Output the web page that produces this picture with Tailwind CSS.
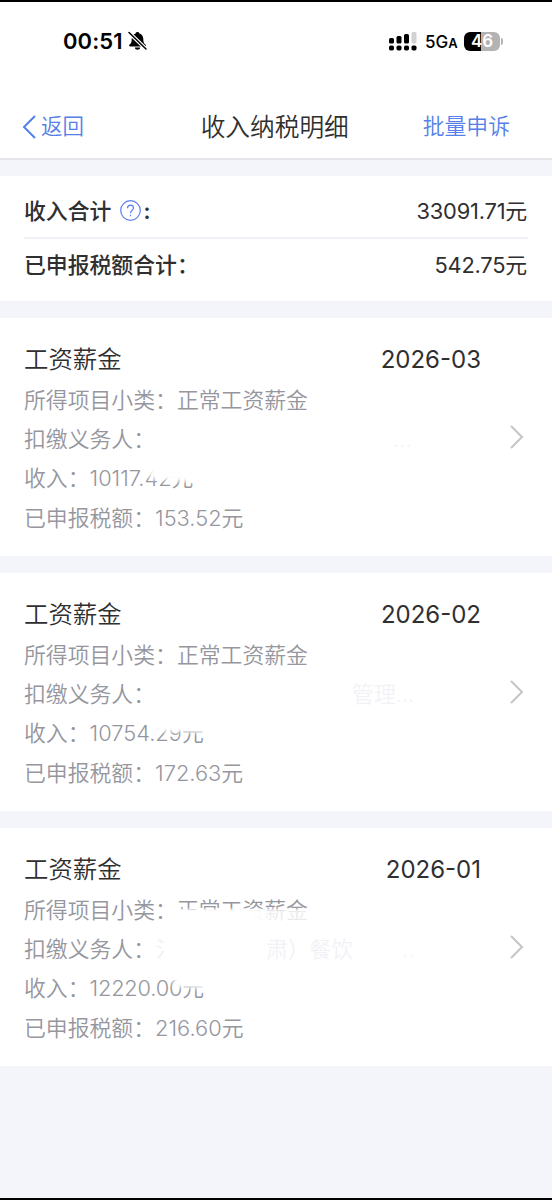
<!DOCTYPE html>
<html lang="zh-CN">
<head>
<meta charset="utf-8">
<title>收入纳税明细</title>
<script src="https://cdn.jsdelivr.net/npm/@tailwindcss/browser@4"></script>
</head>
<body class="bg-[#f4f5fa]">
<div class="flex h-[1200px] w-[552px] flex-col overflow-hidden border-t-2 border-b-2 border-black bg-[#f4f5fa] font-['Inter','Noto_Sans_CJK_SC',sans-serif] text-[21.85px] text-[#2f2f31]">
  <!-- status bar -->
  <div class="flex h-[78px] shrink-0 items-center justify-between bg-white pr-[49px] pl-[63px] text-black">
    <div class="flex items-center gap-[5px]">
      <span class="text-[22px] leading-none font-semibold tracking-[0.1px]">00:51</span>
      <svg class="h-[20px] w-[19px]" viewBox="0 0 19 20"><path d="M9.500 1c-1 0-1.700.6-1.900 1.400C5.200 3.200 3.700 5.300 3.700 8c0 3-.5 4.200-1.800 5.300-.5.400-.8.800-.8 1.200 0 .6.500.9 1.200.9h14.400c.7 0 1.200-.3 1.200-.9 0-.4-.3-.8-.8-1.200-1.300-1.100-1.800-2.300-1.800-5.300 0-2.700-1.500-4.800-3.900-5.600C11.200 1.600 10.500 1 9.500 1zM6.800 16.500h5.400c-.2 1.300-1.300 2.300-2.700 2.300s-2.500-1-2.700-2.300z"/><path d="M1 1.500 18 18" stroke="#fff" stroke-width="3.800"/><path d="M1 1.500 18 18" stroke="#000" stroke-width="1.500" stroke-linecap="round"/></svg>
    </div>
    <div class="flex items-center">
      <svg class="h-[20px] w-[29px]" viewBox="0 0 29 20"><rect x="1" y="7" width="5" height="5.500" rx="1.500"/><rect x="8.500" y="5" width="5" height="7.500" rx="1.500"/><rect x="16" y="3" width="5" height="9.500" rx="1.500"/><rect x="23.500" y="1" width="5" height="11.500" rx="1.500" fill="#d2d2d2"/><rect x="1" y="14.500" width="5" height="5" rx="1.700"/><rect x="8.500" y="14.500" width="5" height="5" rx="1.700"/><rect x="16" y="14.500" width="5" height="5" rx="1.700"/><rect x="23.500" y="14.500" width="5" height="5" rx="1.700"/></svg>
      <span class="ml-[8px] w-[31px] pt-[2px] text-[17px] leading-none font-medium whitespace-nowrap">5G<span class="text-[13px] font-semibold">A</span></span>
      <div class="ml-[8px] flex h-[19px] w-[36px] items-center justify-center rounded-[6px] bg-linear-to-r from-black from-[46%] to-[#b3b3b3] to-[46%] text-[17px] leading-none font-semibold text-white">46</div>
      <div class="ml-px h-[7px] w-[2px] rounded-r-full bg-[#b3b3b3]"></div>
    </div>
  </div>
  <!-- navigation -->
  <div class="grid h-[80px] shrink-0 grid-cols-3 items-center border-b-2 border-[#e5e5e9] bg-white pt-[15px] pr-[42px] pl-[22px] text-[#5580e8]">
    <div class="flex items-center gap-[5px]">
      <svg class="h-[24px] w-[14px]" viewBox="0 0 14 24" fill="none" stroke="currentColor" stroke-width="2"><path d="M13 1 2 12l11 11"/></svg>
      <span class="pt-px text-[21.500px] leading-none font-[350]">返回</span>
    </div>
    <span class="-mr-5 ml-4 pt-px text-[24.700px] leading-none font-[350] whitespace-nowrap text-[#2f2f31]">收入纳税明细</span>
    <span class="pt-px text-right leading-none font-[350] whitespace-nowrap">批量申诉</span>
  </div>
  <!-- totals -->
  <div class="mt-[16px] h-[125px] shrink-0 bg-white px-[24px]">
    <div class="flex h-[63px] items-center justify-between border-b-2 border-[#f0f0f6] pt-[9px] font-medium">
      <span class="flex items-center">收入合计<svg class="ml-[9px] h-[21px] w-[21px]" viewBox="0 0 21 21" fill="none" stroke="#5b80ee" stroke-width="1.200"><circle cx="10.500" cy="10.500" r="9.800"/><path d="M7.500 8.300c0-1.900 1.200-3.100 3-3.100s3 1.100 3 2.800c0 2.300-3 2.300-3 5.200M10.500 14.800v1.500"/></svg><span class="ml-[2px] font-semibold">:</span></span>
      <span class="mr-px font-normal tracking-[-0.200px]">33091.71元</span>
    </div>
    <div class="flex h-[53px] items-center justify-between font-medium">
      <span>已申报税额合计：</span>
      <span class="mr-px font-normal tracking-[-0.200px]">542.75元</span>
    </div>
  </div>
  <!-- 2026-03 -->
  <section class="relative mt-[17px] flex h-[238px] shrink-0 items-center bg-white pr-[28px] pl-[24px]">
    <div class="flex h-full w-[457px] flex-col pt-[20px] font-[350] text-[#95969e]">
      <div class="flex h-[43px] items-center justify-between text-[24.400px] text-[#2f2f31]"><span>工资薪金</span><span class="text-[24px] font-normal">2026-03</span></div>
      <div class="flex h-[39px] items-center">所得项目小类：正常工资薪金</div>
      <div class="flex h-[39px] items-center">扣缴义务人：<span class="ml-[238px] text-[#f3f3f5]">...</span></div>
      <div class="flex h-[39.500px] items-center">收入：<span>10117.42元</span></div>
      <div class="flex h-[39px] items-center">已申报税额：<span>153.52元</span></div>
    </div>
    <svg class="ml-[29px] h-[24px] w-[14px]" viewBox="0 0 14 24" fill="none" stroke="#c5c5c7" stroke-width="2"><path d="m1 1 11 11L1 23"/></svg>
    <div class="absolute top-[141px] left-[150px] h-[22px] w-[57px] rotate-[5deg] bg-white blur-[2px]"></div>
  </section>
  <!-- 2026-02 -->
  <section class="relative mt-[17px] flex h-[238px] shrink-0 items-center bg-white pr-[28px] pl-[24px]">
    <div class="flex h-full w-[457px] flex-col pt-[20px] font-[350] text-[#95969e]">
      <div class="flex h-[43px] items-center justify-between text-[24.400px] text-[#2f2f31]"><span>工资薪金</span><span class="text-[24px] font-normal">2026-02</span></div>
      <div class="flex h-[39px] items-center">所得项目小类：正常工资薪金</div>
      <div class="flex h-[39px] items-center">扣缴义务人：<span class="ml-[197px] text-[#f2f2f6]">管理...</span></div>
      <div class="flex h-[39.500px] items-center">收入：<span>10754.29元</span></div>
      <div class="flex h-[39px] items-center">已申报税额：<span>172.63元</span></div>
    </div>
    <svg class="ml-[29px] h-[24px] w-[14px]" viewBox="0 0 14 24" fill="none" stroke="#c5c5c7" stroke-width="2"><path d="m1 1 11 11L1 23"/></svg>
    <div class="absolute top-[142px] left-[152px] h-[17px] w-[60px] rotate-[2deg] bg-white blur-[2px]"></div>
  </section>
  <!-- 2026-01 -->
  <section class="relative mt-[17px] flex h-[238px] shrink-0 items-center bg-white pr-[28px] pl-[24px]">
    <div class="flex h-full w-[457px] flex-col pt-[20px] font-[350] text-[#95969e]">
      <div class="flex h-[43px] items-center justify-between text-[24.400px] text-[#2f2f31]"><span>工资薪金</span><span class="text-[24px] font-normal">2026-01</span></div>
      <div class="flex h-[39px] items-center">所得项目小类：正常工资薪金</div>
      <div class="flex h-[39px] items-center">扣缴义务人：<span class="text-[#f0f0f4]">氵</span><span class="ml-[89px] text-[#f2f2f6]">肃）餐饮</span><span class="ml-[49px] text-[#f6f6f8]">..</span></div>
      <div class="flex h-[39.500px] items-center">收入：<span class="tracking-[-0.200px]">12220.00元</span></div>
      <div class="flex h-[39px] items-center">已申报税额：<span>216.60元</span></div>
    </div>
    <svg class="ml-[29px] h-[24px] w-[14px]" viewBox="0 0 14 24" fill="none" stroke="#c5c5c7" stroke-width="2"><path d="m1 1 11 11L1 23"/></svg>
    <div class="absolute top-[81px] left-[166px] h-[17px] w-[146px] bg-linear-to-r from-white from-60% to-white/80 to-75% blur-[1px]"></div>
    <div class="absolute top-[142px] left-[174px] h-[18px] w-[38px] rotate-[3deg] bg-white blur-[2px]"></div>
  </section>
</div>
</body>
</html>
